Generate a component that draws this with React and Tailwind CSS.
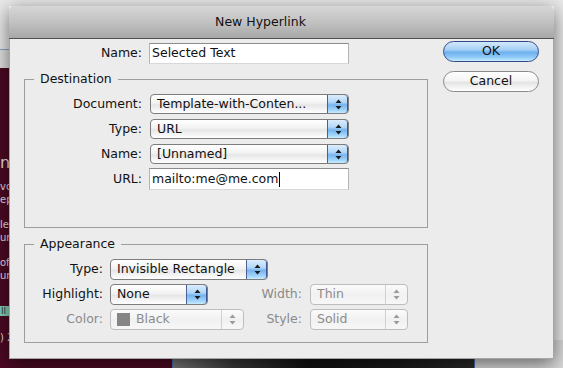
import React from "react";

const font = { fontFamily: '"DejaVu Sans", "Liberation Sans", sans-serif' };

function Arrows({ disabled }) {
  const c = disabled ? "#9a9a9a" : "#1a1a1a";
  return (
    <svg width="7" height="11" viewBox="0 0 7 11">
      <path d="M3.5 0.5 L6.5 4 L0.5 4 Z" fill={c} />
      <path d="M3.5 10.5 L6.5 7 L0.5 7 Z" fill={c} />
    </svg>
  );
}

function Popup({ className, text, disabled, swatch }) {
  return (
    <div
      className={
        "flex rounded-[4px] border overflow-hidden " +
        (disabled
          ? "border-[#bdbdbd] bg-[linear-gradient(180deg,#fbfbfb_0%,#f1f1f1_50%,#f7f7f7_100%)] text-[#8c8c8c] "
          : "border-[#7d7d7d] bg-[linear-gradient(180deg,#ffffff_0%,#f2f2f2_45%,#e6e6e6_55%,#ffffff_100%)] text-[#111] ") +
        className
      }
    >
      <div className="flex flex-1 items-center pl-[6px] gap-[6px] whitespace-nowrap overflow-hidden">
        {swatch && <span className="inline-block h-[13px] w-[13px] bg-[#858585]" />}
        <span>{text}</span>
      </div>
      {disabled ? (
        <div className="flex w-[22px] items-center justify-center border-l border-[#d0d0d0]">
          <Arrows disabled />
        </div>
      ) : (
        <div className="flex w-[21px] items-center justify-center border-l border-[#4c5e93] bg-[linear-gradient(180deg,#dcedfc_0%,#b2d7f8_40%,#76b4ef_55%,#a3d6fb_85%,#c9ecff_100%)] rounded-r-[3px] shadow-[inset_-1px_0_0_#3f5692]">
          <Arrows />
        </div>
      )}
    </div>
  );
}

function Input({ className, children }) {
  return (
    <div
      className={
        "flex items-center bg-white border border-[#b4b4b4] border-t-[#8c8c8c] border-b-[#d8d8d8] pl-[2px] text-[#111] " +
        className
      }
    >
      {children}
    </div>
  );
}

export default function App() {
  return (
    <div
      className="relative h-[368px] w-[563px] overflow-hidden bg-[#e9e9e9] text-[12.5px]"
      style={font}
    >
      {/* desktop behind the window */}
      <div className="absolute left-0 top-[49px] h-[1px] w-[20px] bg-[#8ea3c7]" />
      <div className="absolute left-0 top-[50px] h-[18px] w-[20px] bg-[#e2e2e2]" />
      <div className="absolute left-0 top-[68px] h-[300px] w-[172px] bg-[#4c0923]" />
      <div className="absolute left-[172px] top-[340px] h-[28px] w-[303px] border-x border-[#4a6aa8] bg-[linear-gradient(90deg,#7a7a7a_0%,#3a3a3a_20%,#111_45%,#1b1b1b_75%,#2a2a2a_100%)]" />
      <div className="absolute left-[475px] top-[340px] h-[28px] w-[88px] bg-[#d9d9d9]" />
      <div className="absolute left-0 top-[153px] text-[16px] leading-[20px] text-[#e6dde0]">nt</div>
      <div className="absolute left-0 top-[181px] text-[10px] leading-[12px] text-[#e6dde0]">vo</div>
      <div className="absolute left-0 top-[194px] text-[10px] leading-[12px] text-[#e6dde0]">ep</div>
      <div className="absolute left-0 top-[219px] text-[10px] leading-[12px] text-[#e6dde0]">le</div>
      <div className="absolute left-0 top-[232px] text-[10px] leading-[12px] text-[#e6dde0]">ur</div>
      <div className="absolute left-0 top-[257px] text-[10px] leading-[12px] text-[#e6dde0]">of</div>
      <div className="absolute left-0 top-[270px] text-[10px] leading-[12px] text-[#e6dde0]">ur</div>
      <div className="absolute left-0 top-[306px] h-[10px] w-[12px] bg-[#86d3b4] pl-[1px] text-[9px] leading-[10px] text-[#234]">ll</div>
      <div className="absolute left-0 top-[332px] text-[10px] leading-[12px] text-[#e6dde0]">) 2</div>

      {/* dialog window */}
      <div className="absolute left-[9px] top-[6px] flex h-[353px] w-[545px] flex-col shadow-[0_5px_18px_rgba(0,0,0,0.55)]">
        <div className="flex h-[33px] items-center justify-center rounded-t-[5px] border-b border-[#515151] bg-[linear-gradient(180deg,#d6d6d6_0%,#c2c2c2_50%,#a7a7a7_100%)] pr-[42px] text-[12.5px] text-[#111]">
          New Hyperlink
        </div>
        <div className="flex flex-1 items-start border-x border-b border-[#a5a5a5] bg-[#ececec] pl-[14px] pt-[2px]">
          {/* left column */}
          <div className="flex w-[404px] flex-col pt-[2px]">
            <div className="flex h-[21px] items-center">
              <span className="w-[118px] text-right text-[#111]">Name:</span>
              <Input className="ml-[7px] h-[21px] w-[200px]">Selected Text</Input>
            </div>

            <fieldset className="mt-[8px] h-[156px] border border-[#9d9d9d]">
              <legend className="ml-[9px] px-[6px] leading-[14px] text-[#111]">Destination</legend>
              <div className="flex flex-col gap-[5px] pt-[8px]">
                <div className="flex h-[20px] items-center">
                  <span className="w-[117px] text-right text-[#111]">Document:</span>
                  <Popup className="ml-[8px] h-[20px] w-[199px]" text="Template-with-Conten..." />
                </div>
                <div className="flex h-[20px] items-center">
                  <span className="w-[117px] text-right text-[#111]">Type:</span>
                  <Popup className="ml-[8px] h-[20px] w-[199px]" text="URL" />
                </div>
                <div className="flex h-[20px] items-center">
                  <span className="w-[117px] text-right text-[#111]">Name:</span>
                  <Popup className="ml-[8px] h-[20px] w-[199px]" text="[Unnamed]" />
                </div>
                <div className="-mt-[1px] flex h-[22px] items-center">
                  <span className="w-[117px] text-right text-[#111]">URL:</span>
                  <Input className="ml-[7px] h-[22px] w-[200px]">
                    mailto:me@me.com
                    <span className="ml-[1px] inline-block h-[15px] w-[1px] bg-black" />
                  </Input>
                </div>
              </div>
            </fieldset>

            <fieldset className="mt-[9px] h-[106px] border border-[#9d9d9d]">
              <legend className="ml-[9px] px-[6px] leading-[14px] text-[#111]">Appearance</legend>
              <div className="flex flex-col gap-[4px] pt-[8px]">
                <div className="flex h-[21px] items-center">
                  <span className="w-[78px] text-right text-[#111]">Type:</span>
                  <Popup className="ml-[7px] h-[21px] w-[158px]" text="Invisible Rectangle" />
                </div>
                <div className="flex h-[21px] items-center">
                  <span className="w-[78px] text-right text-[#111]">Highlight:</span>
                  <Popup className="ml-[7px] h-[21px] w-[98px]" text="None" />
                  <span className="w-[94px] text-right text-[#8a8a8a]">Width:</span>
                  <Popup className="ml-[8px] h-[21px] w-[98px]" text="Thin" disabled />
                </div>
                <div className="flex h-[21px] items-center">
                  <span className="w-[78px] text-right text-[#8a8a8a]">Color:</span>
                  <Popup className="ml-[7px] h-[21px] w-[134px]" text="Black" disabled swatch />
                  <span className="w-[58px] text-right text-[#8a8a8a]">Style:</span>
                  <Popup className="ml-[8px] h-[21px] w-[98px]" text="Solid" disabled />
                </div>
              </div>
            </fieldset>
          </div>

          {/* right column */}
          <div className="ml-[15px] flex flex-col gap-[9px]">
            <div className="flex h-[21px] w-[96px] items-center justify-center rounded-full border border-[#34498a] bg-[linear-gradient(180deg,#d3e9fc_0%,#a6d0f5_40%,#6eb1ee_55%,#8fcaf8_80%,#c6ecff_100%)] text-[#111]">
              OK
            </div>
            <div className="flex h-[21px] w-[96px] items-center justify-center rounded-full border border-[#8a8a8a] bg-[linear-gradient(180deg,#ffffff_0%,#f4f4f4_45%,#e4e4e4_55%,#ffffff_100%)] text-[#111]">
              Cancel
            </div>
          </div>
        </div>
      </div>
    </div>
  );
}
